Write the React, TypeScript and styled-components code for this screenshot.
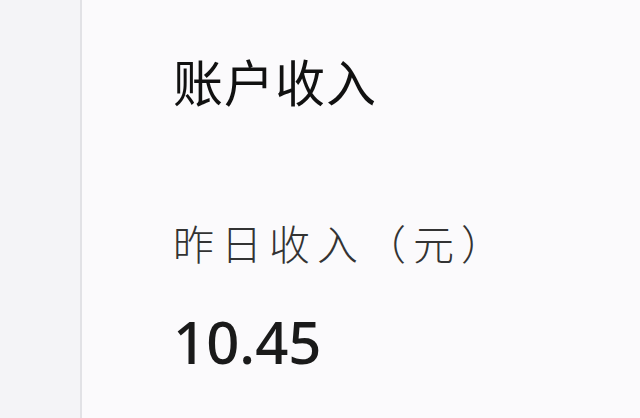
import React from 'react';
import styled, { createGlobalStyle } from 'styled-components';

const GlobalStyle = createGlobalStyle`
  html, body {
    margin: 0;
    padding: 0;
    height: 100%;
    background: #fbfafc;
  }
  #root {
    height: 100%;
  }
`;

const Page = styled.div`
  display: flex;
  height: 418px;
  width: 640px;
  overflow: hidden;
  font-family: "Noto Sans", "Noto Sans CJK SC", sans-serif;
`;

const Sidebar = styled.div`
  width: 80px;
  flex: 0 0 80px;
  background: #f4f4f7;
  border-right: 2px solid #e2e2e6;
`;

const Main = styled.div`
  flex: 1 1 auto;
  padding: 53px 0 0 91px;
  display: flex;
  flex-direction: column;
`;

const Title = styled.h1`
  margin: 0;
  font-size: 50px;
  line-height: 60px;
  font-weight: 400;
  color: #111;
  letter-spacing: 1px;
`;

const Label = styled.div`
  margin-top: 106px;
  font-size: 41px;
  line-height: 50px;
  font-weight: 300;
  color: #333;
  letter-spacing: 7px;
`;

const Amount = styled.div`
  margin-top: 39px;
  font-size: 58px;
  line-height: 68px;
  font-weight: 500;
  color: #1a1a1a;
  letter-spacing: 0;
`;

export default function App() {
  return (
    <>
      <GlobalStyle />
      <Page>
        <Sidebar />
        <Main>
          <Title>账户收入</Title>
          <Label>昨日收入（元）</Label>
          <Amount>10.45</Amount>
        </Main>
      </Page>
    </>
  );
}
